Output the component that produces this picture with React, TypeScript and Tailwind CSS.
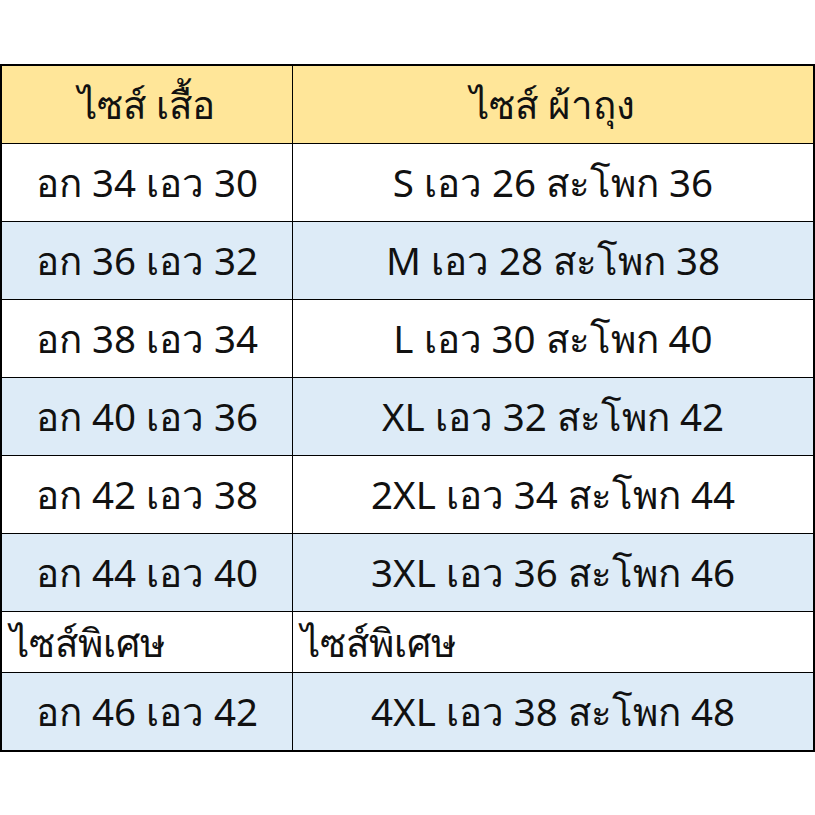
import React from 'react';

type Row = { shirt: string; skirt: string; tone: 'white' | 'blue' | 'special' };

const rows: Row[] = [
  { shirt: 'อก 34 เอว 30', skirt: 'S เอว 26 สะโพก 36', tone: 'white' },
  { shirt: 'อก 36 เอว 32', skirt: 'M เอว 28 สะโพก 38', tone: 'blue' },
  { shirt: 'อก 38 เอว 34', skirt: 'L เอว 30 สะโพก 40', tone: 'white' },
  { shirt: 'อก 40 เอว 36', skirt: 'XL เอว 32 สะโพก 42', tone: 'blue' },
  { shirt: 'อก 42 เอว 38', skirt: '2XL เอว 34 สะโพก 44', tone: 'white' },
  { shirt: 'อก 44 เอว 40', skirt: '3XL เอว 36 สะโพก 46', tone: 'blue' },
  { shirt: 'ไซส์พิเศษ', skirt: 'ไซส์พิเศษ', tone: 'special' },
  { shirt: 'อก 46 เอว 42', skirt: '4XL เอว 38 สะโพก 48', tone: 'blue' },
];

const Cell: React.FC<{ children: React.ReactNode; left?: boolean; special?: boolean }> = ({
  children,
  left,
  special,
}) => (
  <div
    className={`flex items-center ${special ? 'h-[60px] justify-start pl-2' : 'h-[77px] justify-center'} ${
      left ? 'border-r border-black' : ''
    }`}
  >
    {children}
  </div>
);

export default function App() {
  return (
    <div className="w-[815px] h-[815px] bg-white pt-[64px]">
      <div
        className="w-[815px] border-2 border-black text-[38.5px] text-[#111] leading-none"
        style={{ fontFamily: '"Noto Sans", Tahoma, sans-serif' }}
      >
        <div className="grid grid-cols-[291px_1fr] bg-[#ffe699] border-b border-black">
          <Cell left>ไซส์ เสื้อ</Cell>
          <Cell>ไซส์ ผ้าถุง</Cell>
        </div>
        {rows.map((r, i) => (
          <div
            key={i}
            className={`grid grid-cols-[291px_1fr] ${r.tone === 'blue' ? 'bg-[#ddebf7]' : 'bg-white'} ${
              i < rows.length - 1 ? 'border-b border-black' : ''
            }`}
          >
            <Cell left special={r.tone === 'special'}>
              {r.shirt}
            </Cell>
            <Cell special={r.tone === 'special'}>{r.skirt}</Cell>
          </div>
        ))}
      </div>
    </div>
  );
}
